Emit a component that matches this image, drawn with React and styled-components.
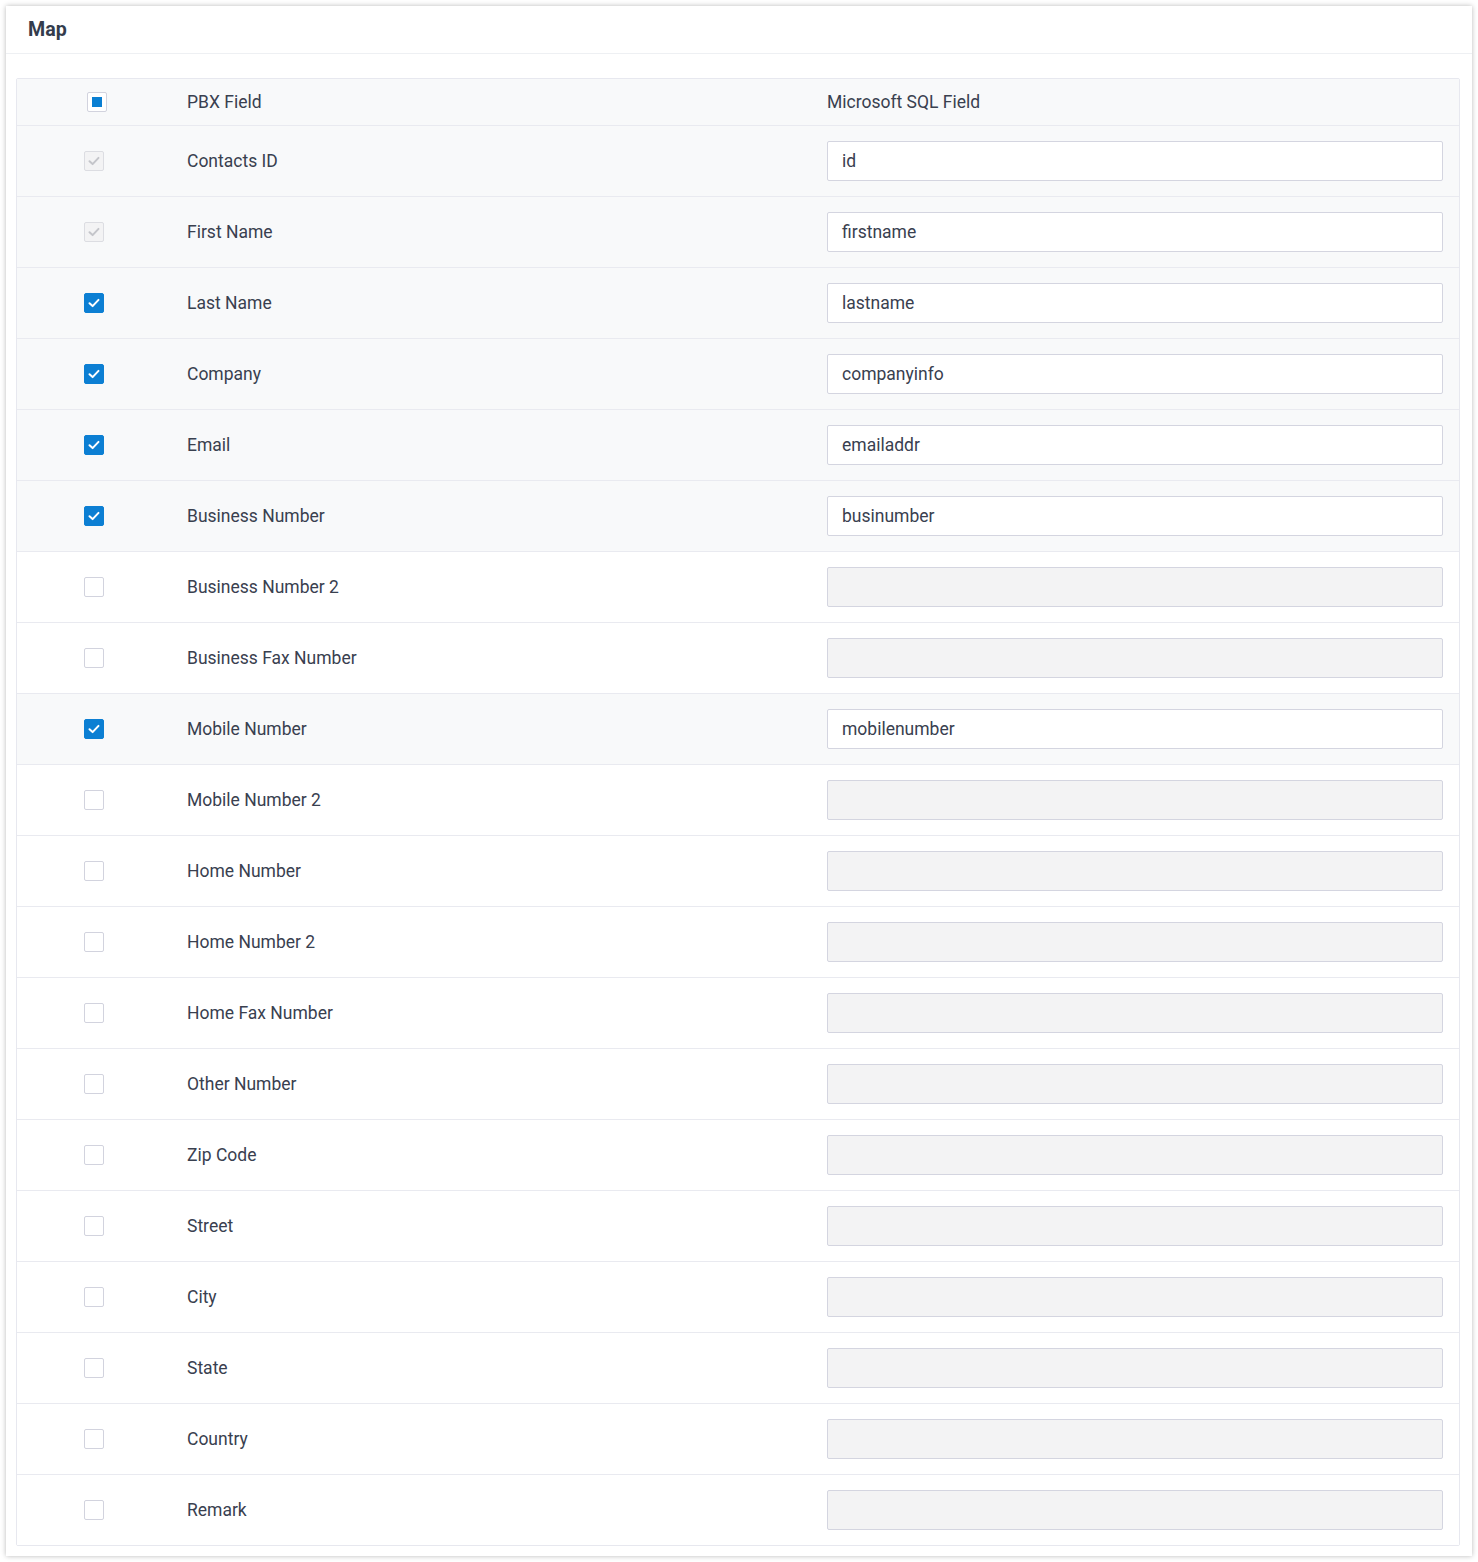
import React from "react";
import styled, { createGlobalStyle } from "styled-components";

const Global = createGlobalStyle`
  html, body { margin: 0; padding: 0; background: #fff; }
  body { font-family: Roboto, "Noto Sans", "Liberation Sans", sans-serif; }
`;

const Page = styled.div`
  padding: 6px;
`;

const Card = styled.section`
  background: #fff;
  box-shadow: 0 0 5px rgba(0, 0, 0, 0.28);
  padding: 0 12px 10px 10px;
`;

const CardHeader = styled.header`
  height: 47px;
  border-bottom: 1px solid #eef0f3;
  margin: 0 -12px 0 -10px;
  padding-left: 22px;
  display: flex;
  align-items: center;
`;

const Title = styled.h2`
  margin: 0;
  font-size: 19.6px;
  font-weight: 700;
  color: #333c4c;
`;

const Table = styled.div`
  margin-top: 24px;
  border: 1px solid #e7e8ef;
  border-radius: 2px;
`;

const Row = styled.div`
  display: grid;
  grid-template-columns: 154px 640px 1fr;
  align-items: center;
  height: ${(p) => (p.$head ? 46 : 70)}px;
  background: ${(p) => (p.$shade ? "#f8f9fa" : "#fff")};
  border-bottom: 1px solid #e9eaf0;
  &:last-child { border-bottom: none; }
`;

const CheckCell = styled.div`
  display: flex;
  justify-content: center;
  padding-left: ${(p) => (p.$head ? 6 : 0)}px;
`;

const Cell = styled.div`
  padding: 0 16px;
  font-size: 17.5px;
  color: #39404f;
`;

const Box = styled.span`
  width: 20px;
  height: 20px;
  box-sizing: border-box;
  border-radius: 2px;
  display: inline-flex;
  align-items: center;
  justify-content: center;
  border: 1px solid
    ${(p) =>
      p.$state === "checked" ? "#0c7fd3" : p.$state === "disabled" ? "#dcdde2" : "#d2d3de"};
  background: ${(p) =>
    p.$state === "checked" ? "#0c7fd3" : p.$state === "disabled" ? "#f3f3f4" : "#fff"};
`;

const Dot = styled.span`
  width: 10px;
  height: 10px;
  background: #0a7fd2;
`;

const Input = styled.div`
  height: 40px;
  box-sizing: border-box;
  border: 1px solid #d4d5e0;
  border-radius: 2px;
  background: ${(p) => (p.$disabled ? "#f3f3f4" : "#fff")};
  display: flex;
  align-items: center;
  padding: 0 14px;
  font-size: 17.5px;
  color: #39404f;
`;

const Tick = ({ color }) => (
  <svg width="14" height="14" viewBox="0 0 14 14">
    <path d="M2.5 7.2 L5.6 10.1 L11.5 3.9" fill="none" stroke={color} strokeWidth="2" strokeLinecap="round" strokeLinejoin="round" />
  </svg>
);

const rows = [
  ["Contacts ID", "id", "disabled"],
  ["First Name", "firstname", "disabled"],
  ["Last Name", "lastname", "checked"],
  ["Company", "companyinfo", "checked"],
  ["Email", "emailaddr", "checked"],
  ["Business Number", "businumber", "checked"],
  ["Business Number 2", "", "off"],
  ["Business Fax Number", "", "off"],
  ["Mobile Number", "mobilenumber", "checked"],
  ["Mobile Number 2", "", "off"],
  ["Home Number", "", "off"],
  ["Home Number 2", "", "off"],
  ["Home Fax Number", "", "off"],
  ["Other Number", "", "off"],
  ["Zip Code", "", "off"],
  ["Street", "", "off"],
  ["City", "", "off"],
  ["State", "", "off"],
  ["Country", "", "off"],
  ["Remark", "", "off"],
];

export default function App() {
  return (
    <>
      <Global />
      <Page>
        <Card>
          <CardHeader>
            <Title>Map</Title>
          </CardHeader>
          <Table>
            <Row $head $shade>
              <CheckCell $head>
                <Box $state="off">
                  <Dot />
                </Box>
              </CheckCell>
              <Cell>PBX Field</Cell>
              <Cell>Microsoft SQL Field</Cell>
            </Row>
            {rows.map(([label, value, state]) => (
              <Row key={label} $shade={state !== "off"}>
                <CheckCell>
                  <Box $state={state}>
                    {state === "checked" && <Tick color="#fff" />}
                    {state === "disabled" && <Tick color="#c4c5ca" />}
                  </Box>
                </CheckCell>
                <Cell>{label}</Cell>
                <Cell>
                  <Input $disabled={state === "off"}>{value}</Input>
                </Cell>
              </Row>
            ))}
          </Table>
        </Card>
      </Page>
    </>
  );
}
